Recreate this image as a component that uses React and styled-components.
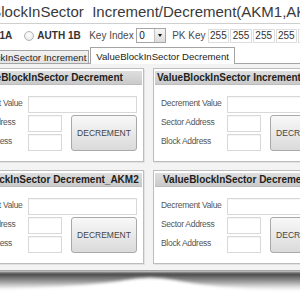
import React from 'react';
import styled, { createGlobalStyle } from 'styled-components';

const Global = createGlobalStyle`
  html, body { margin: 0; padding: 0; background: #fff; }
  body {
    width: 300px; height: 300px; overflow: hidden;
    font-family: "Liberation Sans", Arial, sans-serif;
  }
  * { box-sizing: border-box; }
`;

const Frame = styled.div`
  width: 400px;
  margin-left: -48px;
  display: flex;
  flex-direction: column;
`;

const TitleBar = styled.div`
  height: 24px;
  padding: 3px 0 0 2px;
  border-bottom: 1px solid #cfcfcf;
  font-size: 15px;
  line-height: 17px;
  color: #3a3a3a;
  white-space: pre;
`;

const AuthRow = styled.div`
  height: 23px;
  display: flex;
  align-items: center;
  padding-left: 4px;
  font-size: 10px;
  line-height: 12px;
  color: #333;
  white-space: nowrap;
`;

const RadioOption = styled.label`
  display: flex;
  align-items: center;
  gap: 3px;
  font-weight: bold;
  margin-right: ${p => p.$after}px;
`;

const RadioCircle = styled.span`
  width: 10px;
  height: 10px;
  border-radius: 50%;
  border: 1px solid #b4b4b4;
  background: radial-gradient(circle at 50% 35%, #ffffff 0%, #eeeeee 60%, #dcdcdc 100%);
`;

const FieldLabel = styled.span`
  color: #4a4a4a;
  margin-right: ${p => p.$after}px;
`;

const Select = styled.div`
  width: 30px;
  height: 15px;
  display: flex;
  border: 1px solid #a6a6a6;
  background: #fff;
  margin-right: 6px;
`;

const SelectValue = styled.span`
  flex: 1;
  padding-left: 2px;
  line-height: 13px;
  color: #222;
`;

const SelectArrow = styled.span`
  width: 11px;
  display: flex;
  align-items: center;
  justify-content: center;
  border-left: 1px solid #c4c4c4;
  background: linear-gradient(#f6f6f6, #dcdcdc);
  &::after {
    content: "";
    border-left: 2.5px solid transparent;
    border-right: 2.5px solid transparent;
    border-top: 3px solid #111;
  }
`;

const KeyBytes = styled.div`
  display: flex;
  gap: 1px;
`;

const KeyByte = styled.span`
  width: 21.67px;
  height: 14px;
  border: 1px solid #dddddd;
  background: #fff;
  text-align: center;
  line-height: 12px;
  color: #333;
`;

const TabStrip = styled.div`
  height: 16px;
  display: flex;
  align-items: flex-end;
  padding-left: 2px;
`;

const Tab = styled.div`
  position: relative;
  font-size: 9.6px;
  line-height: 11px;
  color: #222;
  white-space: nowrap;
  border: 1px solid #a4a4a4;
  border-bottom: none;
  ${p => p.$active ? `
    z-index: 1;
    margin-left: 1px;
    margin-bottom: -1px;
    padding: 3px 5px 2px 5px;
    background: #fff;
  ` : `
    padding: 1px 2px 0 3px;
    background: linear-gradient(#f2f2f2, #e2e2e2);
  `}
`;

const Panel = styled.div`
  border: 1px solid #a4a4a4;
  background: #f3f3f3;
  padding: 4px 0 6px 1px;
  display: grid;
  grid-template-columns: 190px 190px;
  column-gap: 9px;
  row-gap: 8px;
`;

const GroupBox = styled.div`
  border: 1px solid #bdbdbd;
  background: #fff;
  padding: 2px 1px 10px 1px;
  box-shadow: 1px 1px 0 #e2e2e2;
`;

const GroupHeader = styled.div`
  height: 14px;
  line-height: 14px;
  padding-left: ${p => p.$indent}px;
  background: linear-gradient(#dedede, #cacaca);
  border-bottom: 1px solid #bdbdbd;
  font-size: 10px;
  font-weight: bold;
  color: #1e1e1e;
  white-space: nowrap;
  overflow: hidden;
`;

const FormGrid = styled.div`
  margin-top: 11px;
  padding-left: 6px;
  display: grid;
  grid-template-columns: 66px 34px 9px 66px;
  grid-template-rows: 17px 17px 17px;
  row-gap: 2px;
`;

const Label = styled.span`
  grid-column: 1;
  align-self: start;
  font-size: 8.5px;
  letter-spacing: -0.3px;
  line-height: 15px;
  color: #555;
  white-space: nowrap;
`;

const TextBox = styled.input`
  grid-column: ${p => (p.$wide ? '2 / -1' : '2')};
  width: 100%;
  height: 100%;
  margin: 0;
  padding: 0;
  border: 1px solid #d8d8d8;
  background: #fff;
  box-shadow: inset 0 1px 1px rgba(0, 0, 0, 0.04);
  outline: none;
`;

const ActionButton = styled.button`
  grid-column: 4;
  grid-row: 2 / span 2;
  margin: 0;
  padding: 0;
  border: 1px solid #a9a9a9;
  border-radius: 3px;
  background: linear-gradient(#f8f8f8, #dadada);
  font-family: "Liberation Sans", Arial, sans-serif;
  font-size: 8.5px;
  color: #444;
  white-space: nowrap;
  overflow: hidden;
`;

const Shadow = styled.svg`
  display: block;
  margin-left: 48px;
  width: 300px;
  height: 26px;
`;

function Group({ title, indent }) {
  return (
    <GroupBox>
      <GroupHeader $indent={indent}>{title}</GroupHeader>
      <FormGrid>
        <Label>Decrement Value</Label>
        <TextBox $wide readOnly value="" />
        <Label>Sector Address</Label>
        <TextBox readOnly value="" />
        <ActionButton>DECREMENT</ActionButton>
        <Label>Block Address</Label>
        <TextBox readOnly value="" />
      </FormGrid>
    </GroupBox>
  );
}

export default function App() {
  return (
    <>
      <Global />
      <Frame>
        <TitleBar>ValueBlockInSector  Increment/Decrement(AKM1,AKM2)</TitleBar>
        <AuthRow>
          <RadioOption $after={12}><RadioCircle />AUTH 1A</RadioOption>
          <RadioOption $after={8.5}><RadioCircle />AUTH 1B</RadioOption>
          <FieldLabel $after={2.5}>Key Index</FieldLabel>
          <Select>
            <SelectValue>0</SelectValue>
            <SelectArrow />
          </Select>
          <FieldLabel $after={2}>PK Key</FieldLabel>
          <KeyBytes>
            {[0, 1, 2, 3, 4, 5].map(i => <KeyByte key={i}>255</KeyByte>)}
          </KeyBytes>
        </AuthRow>
        <TabStrip>
          <Tab>ValueBlockInSector Increment</Tab>
          <Tab $active>ValueBlockInSector Decrement</Tab>
        </TabStrip>
        <Panel>
          <Group title="ValueBlockInSector Decrement" indent={19} />
          <Group title="ValueBlockInSector Increment" indent={2} />
          <Group title="ValueBlockInSector Decrement_AKM2" indent={1} />
          <Group title="ValueBlockInSector Decrement_AKM2" indent={8} />
        </Panel>
        <Shadow viewBox="0 0 300 26">
          <defs>
            <linearGradient id="sh" x1="0" y1="0" x2="0" y2="1">
              <stop offset="0" stopColor="#222" stopOpacity="0.95" />
              <stop offset="0.5" stopColor="#555" stopOpacity="0.6" />
              <stop offset="1" stopColor="#999" stopOpacity="0" />
            </linearGradient>
            <filter id="bl" x="-10%" y="-50%" width="120%" height="200%">
              <feGaussianBlur stdDeviation="1.4" />
            </filter>
          </defs>
          <path
            d="M-10,1 L310,1 L310,20 C260,19 210,16 175,9 Q150,4 125,9 C95,14 40,17 -10,18 Z"
            fill="url(#sh)"
            filter="url(#bl)"
          />
        </Shadow>
      </Frame>
    </>
  );
}
